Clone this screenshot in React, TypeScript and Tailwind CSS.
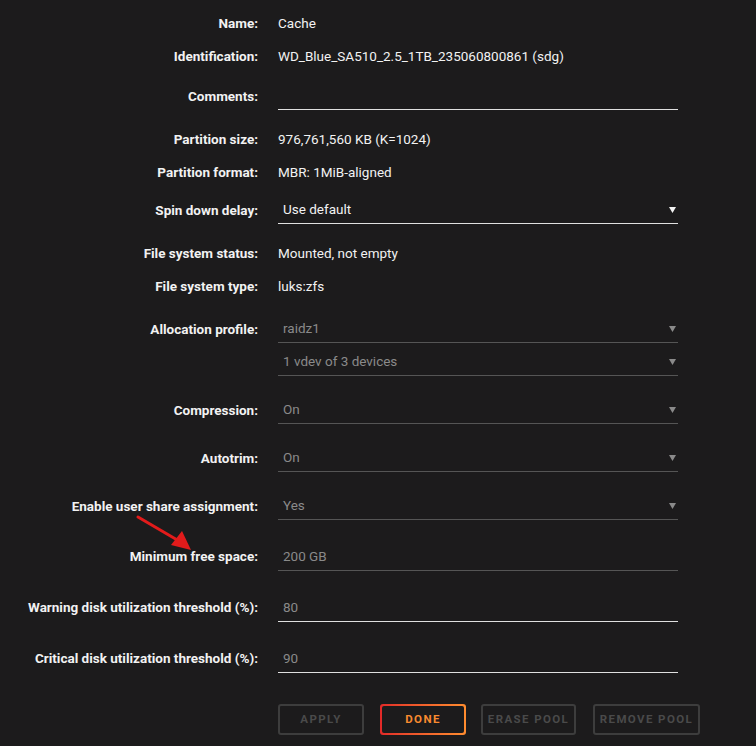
const Caret = ({ on }: { on?: boolean }) => (
  <svg width="7" height="7" viewBox="0 0 7 7" className="shrink-0">
    <polygon points="0,1 7,1 3.5,7" fill={on ? "#f2f2f2" : "#8a8a8a"} />
  </svg>
);

const Label = ({ text }: { text: string }) => (
  <div className="w-[258px] shrink-0 text-right font-bold text-[#f2f2f2]">{text}</div>
);

const TextRow = ({ label, value, mt = "" }: { label: string; value: string; mt?: string }) => (
  <div className={`flex items-center gap-5 h-[33px] ${mt}`}>
    <Label text={label} />
    <div className="text-[#f2f2f2]">{value}</div>
  </div>
);

const SelectRow = ({
  label,
  value,
  on,
  mt = "",
}: {
  label: string;
  value: string;
  on?: boolean;
  mt?: string;
}) => (
  <div className={`flex items-center gap-5 ${mt}`}>
    <Label text={label} />
    <div
      className={`w-[400px] h-[28px] flex items-center justify-between pl-[5px] pr-[2px] border-b ${
        on ? "border-[#e0e0e0] text-[#f2f2f2]" : "border-[#555] text-[#8a8a8a]"
      }`}
    >
      <span>{value}</span>
      <Caret on={on} />
    </div>
  </div>
);

const InputRow = ({
  label,
  value,
  dim,
  h = "h-[29px]",
  mt = "",
}: {
  label: string;
  value: string;
  dim?: boolean;
  h?: string;
  mt?: string;
}) => (
  <div className={`flex items-center gap-5 ${mt}`}>
    <Label text={label} />
    <div
      className={`w-[400px] ${h} flex items-center pl-[5px] border-b text-[#8a8a8a] ${
        dim ? "border-[#555]" : "border-[#e0e0e0]"
      }`}
    >
      {value}
    </div>
  </div>
);

const Btn = ({ text, w }: { text: string; w: string }) => (
  <div
    className={`${w} h-[31px] flex items-center justify-center rounded-[3px] border-2 border-[#3d3d3d] text-[#4a4a4a] text-[11.5px] font-bold tracking-[1.4px]`}
  >
    {text}
  </div>
);

export default function App() {
  return (
    <div
      className="relative w-[756px] h-[746px] overflow-hidden bg-[#1c1b1c] text-[13.5px]"
      style={{ fontFamily: "Roboto, 'Noto Sans', sans-serif" }}
    >
      <div className="flex flex-col pt-[7px]">
        <TextRow label="Name:" value="Cache" />
        <TextRow label="Identification:" value="WD_Blue_SA510_2.5_1TB_235060800861 (sdg)" />
        <InputRow label="Comments:" value="" h="h-[28px]" mt="mt-[9px]" />
        <TextRow label="Partition size:" value="976,761,560 KB (K=1024)" mt="mt-[13px]" />
        <TextRow label="Partition format:" value="MBR: 1MiB-aligned" />
        <SelectRow label="Spin down delay:" value="Use default" on mt="mt-[7px]" />
        <TextRow label="File system status:" value="Mounted, not empty" mt="mt-[13px]" />
        <TextRow label="File system type:" value="luks:zfs" />
        <SelectRow label="Allocation profile:" value="raidz1" mt="mt-[12px]" />
        <SelectRow label="" value="1 vdev of 3 devices" mt="mt-[5px]" />
        <SelectRow label="Compression:" value="On" mt="mt-[20px]" />
        <SelectRow label="Autotrim:" value="On" mt="mt-[20px]" />
        <SelectRow label="Enable user share assignment:" value="Yes" mt="mt-[20px]" />
        <InputRow label="Minimum free space:" value="200 GB" dim mt="mt-[22px]" />
        <InputRow label="Warning disk utilization threshold (%):" value="80" mt="mt-[22px]" />
        <InputRow label="Critical disk utilization threshold (%):" value="90" mt="mt-[22px]" />
        <div className="flex items-center pl-[278px] mt-[31px]">
          <Btn text="APPLY" w="w-[86px]" />
          <div className="ml-[16px] w-[86px] h-[31px] rounded-[3px] p-[2px] bg-linear-to-r from-[#e22828] to-[#ff8c2f]">
            <div className="w-full h-full rounded-[2px] bg-[#1c1b1c] flex items-center justify-center text-[11.5px] font-bold tracking-[1.4px] text-[#f98a2f]">
              DONE
            </div>
          </div>
          <div className="ml-[15px]">
            <Btn text="ERASE POOL" w="w-[95px]" />
          </div>
          <div className="ml-[17px]">
            <Btn text="REMOVE POOL" w="w-[107px]" />
          </div>
        </div>
      </div>

      <svg className="absolute left-0 top-0 pointer-events-none" width="756" height="746">
        <line x1="138" y1="517" x2="179" y2="541" stroke="#e21b1b" strokeWidth="3" strokeLinecap="round" />
        <polygon points="191,550 171,545 182,531" fill="#e21b1b" />
      </svg>
    </div>
  );
}
